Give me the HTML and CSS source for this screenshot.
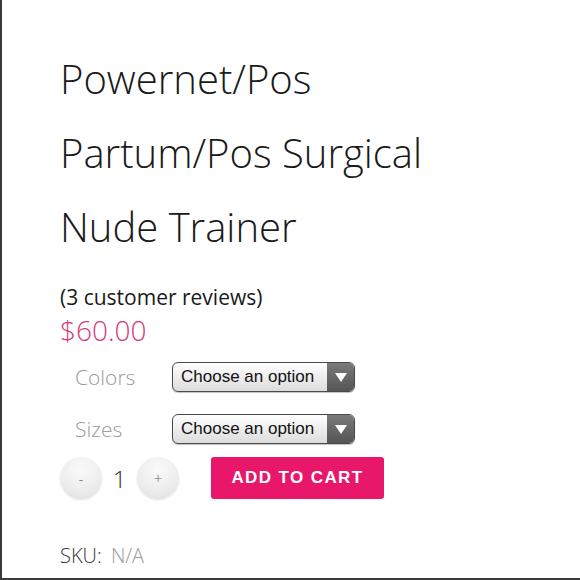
FILE: index.html
```html
<!DOCTYPE html>
<html lang="en">
<head>
    <meta charset="UTF-8">
    <meta name="viewport" content="width=device-width, initial-scale=1.0">
    <title>Powernet/Pos Partum/Pos Surgical Nude Trainer</title>
    <link rel="stylesheet" href="styles.css">
</head>
<body>
    <div class="product">
        <h1 class="product-title">Powernet/Pos Partum/Pos Surgical Nude Trainer</h1>

        <div class="reviews">(3 customer reviews)</div>
        <div class="price">$60.00</div>

        <div class="variations">
            <div class="variation-row">
                <span class="variation-label">Colors</span>
                <div class="select-box">
                    <span class="select-text">Choose an option</span>
                    <span class="select-arrow"></span>
                </div>
            </div>
            <div class="variation-row">
                <span class="variation-label">Sizes</span>
                <div class="select-box">
                    <span class="select-text">Choose an option</span>
                    <span class="select-arrow"></span>
                </div>
            </div>
        </div>

        <div class="cart-row">
            <div class="quantity">
                <button type="button" class="qty-btn">-</button>
                <span class="qty-value">1</span>
                <button type="button" class="qty-btn">+</button>
            </div>
            <button type="button" class="add-to-cart">ADD TO CART</button>
        </div>

        <div class="sku">SKU: <span class="sku-value">N/A</span></div>
    </div>
</body>
</html>
```

FILE: styles.css
```css
body {
    margin: 0;
    background-color: #ffffff;
    font-family: "Open Sans", Arial, sans-serif;
    color: #222222;
}
.product {
    box-sizing: border-box;
    height: 580px;
    overflow: hidden;
    border-left: 2px solid #3a3a3a;
    border-bottom: 2px solid #3a3a3a;
    padding: 42px 0 0 58px;
}
.product-title {
    margin: 0;
    width: 400px;
    font-size: 40px;
    font-weight: 300;
    line-height: 74px;
    color: #1a1a1a;
}
.reviews {
    margin-top: 19px;
    font-size: 21px;
    line-height: 28px;
    color: #1a1a1a;
}
.price {
    font-size: 28px;
    font-weight: 300;
    line-height: 38px;
    color: #d8387a;
}
.variations {
    margin-top: 2px;
}
.variation-row {
    display: flex;
    align-items: center;
    height: 52px;
}
.variation-label {
    width: 97px;
    padding-left: 15px;
    font-size: 21px;
    font-weight: 300;
    color: #9a9a9a;
}
.select-box {
    box-sizing: border-box;
    display: flex;
    width: 183px;
    height: 30px;
    border: 1px solid #4a4a4a;
    border-radius: 6px;
    overflow: hidden;
    background: linear-gradient(#ffffff, #dcdcdc);
    box-shadow: 0 1px 1px rgba(0, 0, 0, 0.25);
}
.select-text {
    flex: 1;
    padding-left: 8px;
    font-family: "Liberation Sans", Arial, sans-serif;
    font-size: 17px;
    line-height: 28px;
    color: #111111;
}
.select-arrow {
    position: relative;
    width: 27px;
    background: linear-gradient(#7a7a7a, #555555);
}
/* white triangle inside the dark arrow box */
.select-arrow::after {
    content: "";
    position: absolute;
    left: 8px;
    top: 10px;
    border-left: 6px solid transparent;
    border-right: 6px solid transparent;
    border-top: 9px solid #ffffff;
}
.cart-row {
    display: flex;
    align-items: center;
    margin-top: 2px;
}
.quantity {
    display: flex;
    align-items: center;
    width: 151px;
}
.qty-btn {
    width: 42px;
    height: 42px;
    padding: 0;
    border: none;
    border-radius: 50%;
    background: radial-gradient(circle at 50% 30%, #fafafa 0%, #ececec 60%, #dcdcdc 100%);
    box-shadow: 0 1px 2px rgba(0, 0, 0, 0.12);
    font-family: "Open Sans", Arial, sans-serif;
    font-size: 15px;
    font-weight: 300;
    color: #666666;
}
.qty-value {
    width: 35px;
    text-align: center;
    font-size: 24px;
    font-weight: 300;
    color: #333333;
}
.add-to-cart {
    width: 173px;
    height: 42px;
    border: none;
    border-radius: 3px;
    background-color: #e8176a;
    color: #ffffff;
    font-family: "Liberation Sans", Arial, sans-serif;
    font-size: 17px;
    font-weight: bold;
    letter-spacing: 1.4px;
    cursor: pointer;
}
.sku {
    margin-top: 43px;
    font-size: 20px;
    font-weight: 300;
    color: #333333;
}
.sku-value {
    margin-left: 4px;
    color: #9a9a9a;
}
```
